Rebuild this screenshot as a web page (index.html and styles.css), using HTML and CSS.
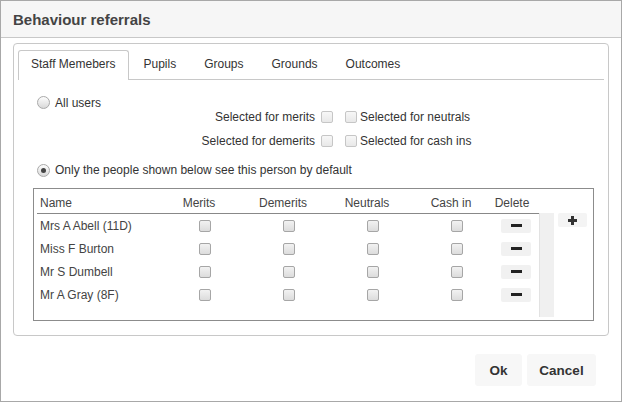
FILE: index.html
```html
<!DOCTYPE html>
<html>
<head>
<meta charset="utf-8">
<link rel="stylesheet" href="styles.css">
</head>
<body>
<div class="dialog">
  <div class="titlebar">Behaviour referrals</div>
  <div class="frame">
    <div class="tabs">
      <div class="tab active">Staff Memebers</div>
      <div class="tab">Pupils</div>
      <div class="tab">Groups</div>
      <div class="tab">Grounds</div>
      <div class="tab">Outcomes</div>
    </div>
    <div class="panel">
      <div class="radio-row all"><span class="radio"></span>All users</div>
      <div class="sel-grid">
        <div class="sel left">Selected for merits<span class="cb light"></span></div>
        <div class="sel right"><span class="cb light"></span>Selected for neutrals</div>
        <div class="sel left">Selected for demerits<span class="cb light"></span></div>
        <div class="sel right"><span class="cb light"></span>Selected for cash ins</div>
      </div>
      <div class="radio-row only"><span class="radio checked"></span>Only the people shown below see this person by default</div>
      <div class="tbox">
        <div class="grid">
          <div class="th name">Name</div>
          <div class="th">Merits</div>
          <div class="th">Demerits</div>
          <div class="th">Neutrals</div>
          <div class="th">Cash in</div>
          <div class="th del">Delete</div>

          <div class="td name">Mrs A Abell (11D)</div>
          <div class="td"><span class="cb"></span></div>
          <div class="td"><span class="cb"></span></div>
          <div class="td"><span class="cb"></span></div>
          <div class="td"><span class="cb"></span></div>
          <div class="td"><span class="minus-btn"><span class="bar"></span></span></div>

          <div class="td name">Miss F Burton</div>
          <div class="td"><span class="cb"></span></div>
          <div class="td"><span class="cb"></span></div>
          <div class="td"><span class="cb"></span></div>
          <div class="td"><span class="cb"></span></div>
          <div class="td"><span class="minus-btn"><span class="bar"></span></span></div>

          <div class="td name">Mr S Dumbell</div>
          <div class="td"><span class="cb"></span></div>
          <div class="td"><span class="cb"></span></div>
          <div class="td"><span class="cb"></span></div>
          <div class="td"><span class="cb"></span></div>
          <div class="td"><span class="minus-btn"><span class="bar"></span></span></div>

          <div class="td name">Mr A Gray (8F)</div>
          <div class="td"><span class="cb"></span></div>
          <div class="td"><span class="cb"></span></div>
          <div class="td"><span class="cb"></span></div>
          <div class="td"><span class="cb"></span></div>
          <div class="td"><span class="minus-btn"><span class="bar"></span></span></div>
        </div>
        <div class="scroll"></div>
        <div class="plus-btn">
          <svg width="9" height="9" viewBox="0 0 9 9"><path d="M3 0h3v3h3v3H6v3H3V6H0V3h3z" fill="#333"/></svg>
        </div>
      </div>
    </div>
  </div>
  <div class="footer">
    <button class="btn ok">Ok</button>
    <button class="btn cancel">Cancel</button>
  </div>
</div>
</body>
</html>
```

FILE: styles.css
```css
* { box-sizing: border-box; }
html, body { margin: 0; padding: 0; background: #fff; }
body {
  font-family: "Liberation Sans", Arial, sans-serif;
  font-size: 12px;
  color: #333;
}
.dialog {
  width: 622px;
  height: 402px;
  border: 1px solid #a8a8a8;
  background: #fff;
  display: flex;
  flex-direction: column;
}
.titlebar {
  height: 37px;
  line-height: 37px;
  padding-left: 12px;
  background: #f6f6f6;
  border-bottom: 1px solid #c8c8c8;
  font-weight: bold;
  font-size: 15px;
  color: #444;
}
.frame {
  margin: 5px 12px 0 12px;
  border: 1px solid #c8c8c8;
  border-radius: 4px;
  padding: 6px 4px 14px 4px;
}
.tabs {
  display: flex;
  align-items: flex-start;
  height: 30px;
  border-bottom: 1px solid #c8c8c8;
}
.tab {
  height: 30px;
  line-height: 27px;
  padding: 0 13px;
  border: 1px solid transparent;
  border-bottom: 0;
  border-radius: 3px 3px 0 0;
  color: #333;
}
.tab.active {
  padding: 0 13px 0 12px;
  border-color: #c8c8c8;
  background: #fff;
}
.panel {
  display: flex;
  flex-direction: column;
}
.radio-row {
  display: flex;
  align-items: center;
  gap: 5px;
  margin-left: 19px;
  height: 12px;
}
.radio-row.all { margin-top: 17px; height: 11px; }
.radio-row.only { margin-top: 14px; }
.radio {
  width: 13px;
  height: 13px;
  border-radius: 50%;
  border: 1px solid #a9a9a9;
  background: linear-gradient(#fdfdfd, #d9d9d9);
  display: flex;
  align-items: center;
  justify-content: center;
}
.radio.checked::after {
  content: "";
  width: 5px;
  height: 5px;
  border-radius: 50%;
  background: #444;
}
.sel-grid {
  display: grid;
  grid-template-columns: 315px auto;
  column-gap: 12px;
  row-gap: 6px;
  grid-auto-rows: 18px;
}
.sel {
  display: flex;
  align-items: center;
}
.sel.left { justify-content: flex-end; gap: 6px; }
.sel.right { gap: 3px; }
.cb {
  display: inline-block;
  width: 12px;
  height: 12px;
  border: 1px solid #a6a6a6;
  border-radius: 2px;
  background: linear-gradient(#f2f2f2, #dcdcdc);
}
.cb.light {
  border-color: #c6c6c6;
  background: linear-gradient(#f7f7f7, #e8e8e8);
}
.tbox {
  margin: 12px 0 0 15px;
  width: 561px;
  height: 133px;
  border: 1px solid #8c8c8c;
  padding-left: 3px;
  display: flex;
  align-items: flex-start;
}
.grid {
  width: 502px;
  display: grid;
  grid-template-columns: 120px 84px 84px 84px 84px 46px;
  grid-template-rows: 25px;
  grid-auto-rows: 23px;
}
.th {
  height: 25px;
  padding-top: 4px;
  display: flex;
  align-items: center;
  justify-content: center;
  border-bottom: 1px solid #888;
  color: #444;
}
.th.name, .td.name { justify-content: flex-start; padding-left: 3px; }
.th.del { padding-right: 8px; }
.td {
  display: flex;
  align-items: center;
  justify-content: center;
  color: #444;
}
.td .cb { margin-left: 12px; }
.minus-btn {
  width: 30px;
  height: 14px;
  background: #f1f1f1;
  border-radius: 2px;
  display: flex;
  align-items: center;
  justify-content: center;
}
.minus-btn .bar {
  width: 11px;
  height: 3px;
  background: #222;
}
.scroll {
  margin-top: 24px;
  width: 15px;
  height: 104px;
  background: #f0f0f0;
  border-left: 1px solid #e2e2e2;
}
.plus-btn {
  margin: 24px 0 0 4px;
  width: 29px;
  height: 14px;
  background: #f4f4f4;
  border-radius: 2px;
  display: flex;
  align-items: center;
  justify-content: center;
}
.plus-btn svg { display: block; }
.footer {
  display: flex;
  justify-content: flex-end;
  gap: 5px;
  margin-top: 18px;
  padding-right: 25px;
}
.btn {
  font-family: "Liberation Sans", Arial, sans-serif;
  font-weight: bold;
  font-size: 13.5px;
  color: #333;
  background: #f7f7f7;
  border: 0;
  border-radius: 3px;
  height: 32px;
  padding: 0;
}
.btn.ok { width: 47px; }
.btn.cancel { width: 69px; }
```
